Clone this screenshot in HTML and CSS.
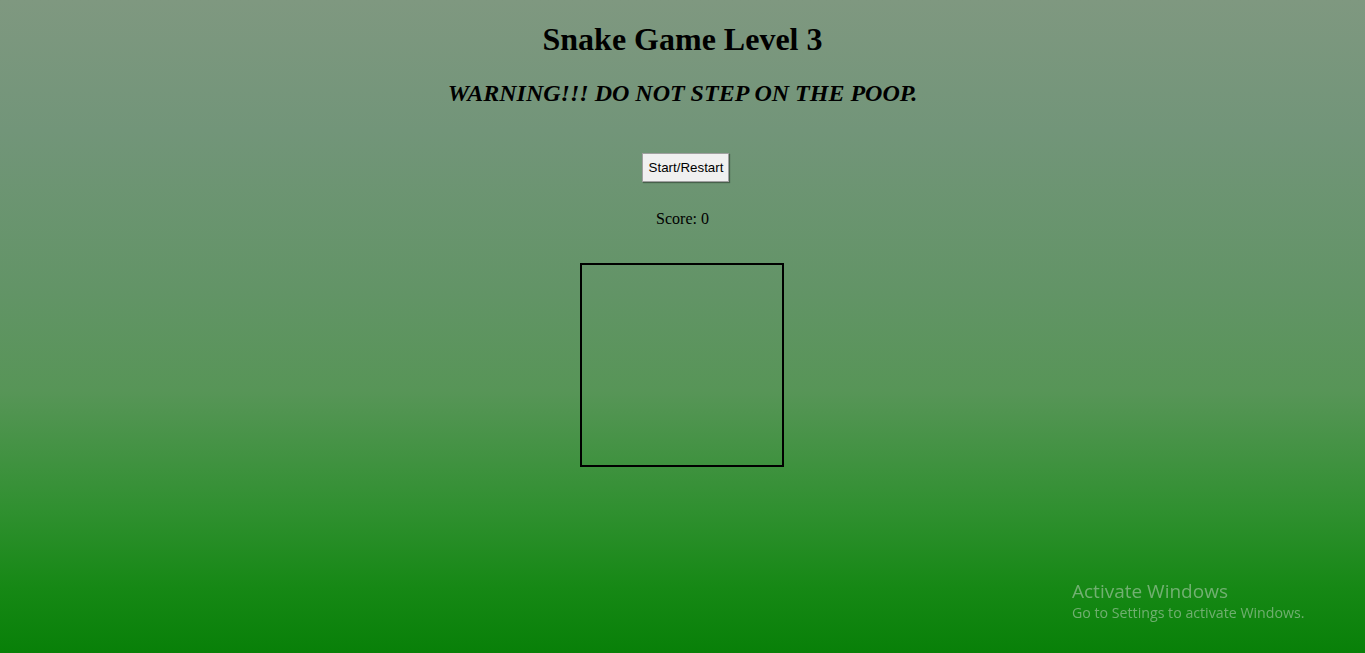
FILE: index.html
```html
<!DOCTYPE html>
<html lang="en">
<head>
<meta charset="utf-8">
<title>Snake Game Level 3</title>
<link rel="stylesheet" href="styles.css">
</head>
<body>
<main class="game">
  <h1 class="title">Snake Game Level 3</h1>
  <h2 class="warning">WARNING!!! DO NOT STEP ON THE POOP.</h2>
  <button class="start-btn" type="button">Start/Restart</button>
  <p class="score">Score: 0</p>
  <div class="board"></div>
</main>
<div class="activate">
  <div class="activate-title">Activate Windows</div>
  <div class="activate-sub">Go to Settings to activate Windows.</div>
</div>
</body>
</html>
```
FILE: styles.css
```css
html, body {
  margin: 0;
  padding: 0;
  height: 100%;
}
body {
  font-family: "Liberation Serif", "Times New Roman", serif;
  color: #000;
  background: linear-gradient(to bottom,
    #7f9880 0%,
    #729579 20%,
    #629466 45%,
    #579557 60%,
    #309030 78%,
    #168815 90%,
    #088008 100%);
  min-height: 100vh;
  overflow: hidden;
}
.game {
  display: flex;
  flex-direction: column;
  align-items: center;
}
.title {
  font-size: 32px;
  font-weight: bold;
  line-height: 37px;
  margin: 21px 0 0;
}
.warning {
  font-size: 24px;
  font-style: italic;
  font-weight: bold;
  line-height: 28px;
  margin: 21px 0 0;
}
.start-btn {
  margin: 46px 0 0 6px;
  font-family: "Liberation Sans", Arial, sans-serif;
  font-size: 13.33px;
  line-height: 15px;
  padding: 6px 5px 6px 6px;
  background: #f0f0f0;
  color: #000;
  border: 1px solid #a0a0a0;
  border-radius: 0;
  box-shadow: 1px 1px 1px rgba(0, 0, 0, 0.35);
}
.score {
  font-size: 16px;
  line-height: 18px;
  margin: 28px 0 0;
}
.board {
  width: 200px;
  height: 200px;
  border: 2px solid #000;
  margin: 35px 2px 0 0;
}
.activate {
  position: fixed;
  left: 1072px;
  top: 579px;
  font-family: "Open Sans", "Noto Sans", sans-serif;
  color: rgba(190, 210, 190, 0.55);
}
.activate-title {
  font-size: 19px;
  line-height: 24px;
}
.activate-sub {
  font-size: 14.2px;
  line-height: 20px;
}
```
